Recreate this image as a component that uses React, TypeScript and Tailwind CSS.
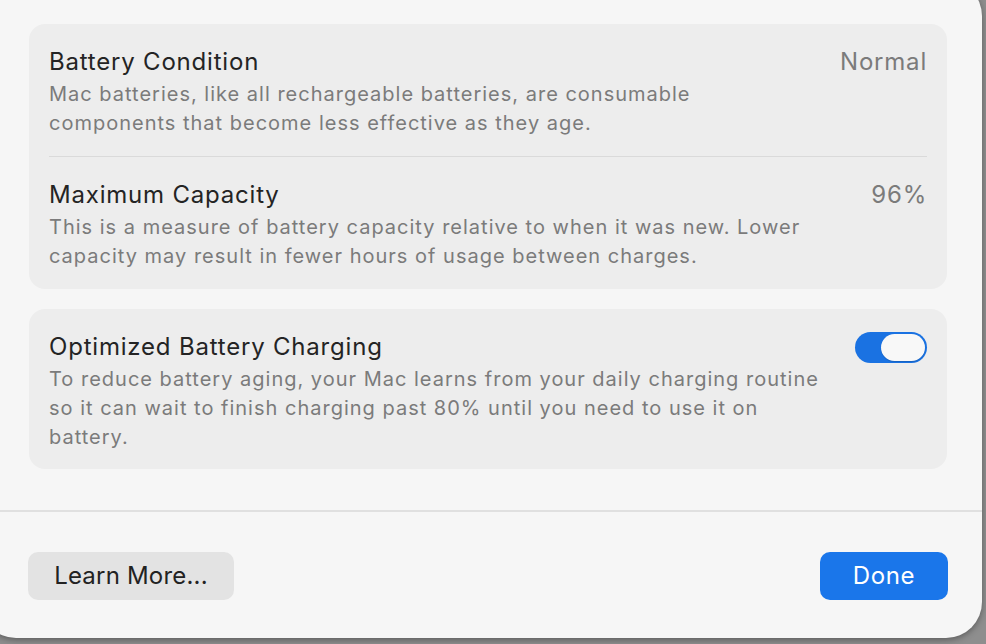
import React from "react";

function Row({ title, value, desc }: { title: string; value?: React.ReactNode; desc: string[] }) {
  return (
    <div className="flex items-start justify-between">
      <div className="flex flex-col">
        <div className="text-[24px] leading-[30px] tracking-[0.8px] text-[#242424]">{title}</div>
        <div className="mt-[3px] text-[20px] leading-[29px] tracking-[1px] text-[#7b7b7b]">
          {desc.map((l, i) => (
            <div key={i}>{l}</div>
          ))}
        </div>
      </div>
      {value}
    </div>
  );
}

export default function App() {
  return (
    <div
      className="relative h-[644px] w-[986px] overflow-hidden bg-[#8e8e8e]"
      style={{ fontFamily: "Inter, 'Noto Sans', sans-serif" }}
    >
      <div className="absolute left-[-20px] top-[-20px] flex h-[658px] w-[1002px] flex-col rounded-[36px] bg-[#f6f6f6] shadow-[0_2px_6px_rgba(0,0,0,0.35)]">
        <div className="flex flex-col gap-[20px] pl-[49px] pr-[35px] pt-[44px]">
          <div className="flex flex-col rounded-[16px] bg-[#ededed] px-[20px]">
            <div className="pb-[18px] pt-[23px]">
              <Row
                title="Battery Condition"
                value={<div className="text-[24px] leading-[30px] tracking-[0.8px] text-[#7b7b7b]">Normal</div>}
                desc={[
                  "Mac batteries, like all rechargeable batteries, are consumable",
                  "components that become less effective as they age.",
                ]}
              />
            </div>
            <div className="h-[1px] bg-[#dadada]" />
            <div className="pb-[18px] pt-[23px]">
              <Row
                title="Maximum Capacity"
                value={<div className="text-[24px] leading-[30px] tracking-[0.8px] text-[#7b7b7b]">96%</div>}
                desc={[
                  "This is a measure of battery capacity relative to when it was new. Lower",
                  "capacity may result in fewer hours of usage between charges.",
                ]}
              />
            </div>
          </div>
          <div className="rounded-[16px] bg-[#ededed] px-[20px] pb-[17px] pt-[23px]">
            <Row
              title="Optimized Battery Charging"
              value={
                <div className="flex h-[31px] w-[72px] items-center justify-end rounded-full bg-[#1a72e2] pr-[2px]">
                  <div className="h-[27px] w-[44px] rounded-full bg-[#f8f8f8] shadow-[0_1px_1px_rgba(0,0,0,0.15)]" />
                </div>
              }
              desc={[
                "To reduce battery aging, your Mac learns from your daily charging routine",
                "so it can wait to finish charging past 80% until you need to use it on",
                "battery.",
              ]}
            />
          </div>
        </div>
        <div className="mt-[41px] h-[2px] bg-[#e0e0e0]" />
        <div className="flex items-center justify-between pl-[48px] pr-[34px] pt-[40px]">
          <button className="flex h-[48px] w-[206px] items-center justify-center rounded-[10px] bg-[#e3e3e3] text-[24px] tracking-[0.2px] text-[#222222]">
            Learn More...
          </button>
          <button className="flex h-[48px] w-[128px] items-center justify-center rounded-[10px] bg-[#1a76ea] text-[24px] tracking-[0.6px] text-white">
            Done
          </button>
        </div>
      </div>
    </div>
  );
}
